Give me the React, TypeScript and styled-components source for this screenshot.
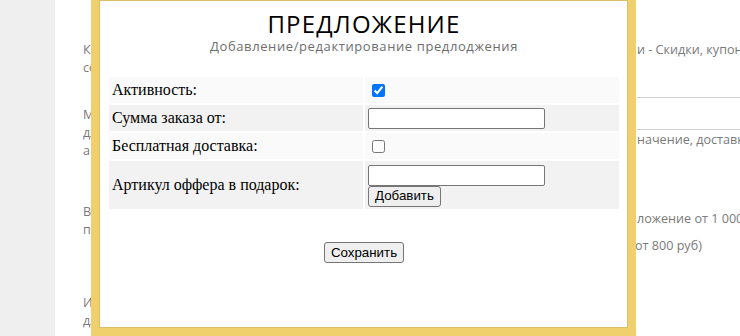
import React from "react";
import styled, { createGlobalStyle } from "styled-components";

const Global = createGlobalStyle`
  html, body { margin: 0; padding: 0; background: #fff; }
  body { width: 740px; height: 336px; overflow: hidden; }
  #root { position: relative; height: 336px; }
`;

const Page = styled.div`
  display: grid;
  grid-template-columns: 55px 1fr;
  height: 336px;
  overflow: hidden;
`;

const Sidebar = styled.aside`
  background: #efeff0;
`;

const Content = styled.main`
  display: grid;
  grid-template-columns: 554px 1fr;
  padding-left: 28px;
  font-family: "Open Sans", "Liberation Sans", sans-serif;
  font-size: 12.6px;
  line-height: 18px;
  color: #7a7a7a;
  overflow: hidden;
`;

const Column = styled.div`
  display: flex;
  flex-direction: column;
  min-width: 0;
`;

const Para = styled.div<{ $mt: number }>`
  margin-top: ${(p) => p.$mt}px;
`;

const Line = styled.div`
  white-space: nowrap;
  overflow: hidden;
`;

const Rule = styled.hr<{ $mt: number }>`
  margin: ${(p) => p.$mt}px 0 0 0;
  border: none;
  border-top: 1px solid #cfcfcf;
  height: 0;
`;

const RightLine = styled.div<{ $mt: number; $shift?: number }>`
  margin-top: ${(p) => p.$mt}px;
  margin-left: ${(p) => p.$shift ?? 0}px;
  white-space: nowrap;
`;

const Modal = styled.section`
  position: absolute;
  left: 91px;
  top: 0;
  width: 545px;
  height: 336px;
  box-sizing: border-box;
  border: 8px solid #efd06c;
  border-top: none;
  background: #fff;
  box-shadow: inset 0 0 0 1px #dcc067;
  padding: 10px 7px 0 8px;
`;

const Title = styled.h1`
  margin: 0;
  text-align: center;
  font-family: "Open Sans", "Liberation Sans", sans-serif;
  font-weight: 400;
  font-size: 24px;
  letter-spacing: 1.2px;
  line-height: 28px;
  color: #000;
`;

const Subtitle = styled.div`
  text-align: center;
  font-family: "Open Sans", "Liberation Sans", sans-serif;
  font-size: 13px;
  letter-spacing: 0.6px;
  line-height: 16px;
  color: #6e6e6e;
`;

const Table = styled.table`
  margin-top: 21px;
  width: 514px;
  border-spacing: 2px;
  font-family: "Liberation Serif", "Times New Roman", serif;
  font-size: 16px;
  color: #000;
`;

const Row = styled.tr<{ $alt: boolean; $h?: number }>`
  background: ${(p) => (p.$alt ? "#f2f2f2" : "#fafafa")};
  height: ${(p) => p.$h ?? 26}px;
`;

const Cell = styled.td`
  width: 50%;
  padding: 0 3px;
  vertical-align: middle;
`;

const Stack = styled.div`
  display: flex;
  flex-direction: column;
  align-items: flex-start;
  padding: 1px 0 0 0;
`;

const TextInput = styled.input`
  box-sizing: border-box;
  width: 177px;
  height: 21px;
  margin: 0;
  border: 1px solid #767676;
  border-radius: 2px;
  padding: 1px 2px;
  font-family: "Liberation Sans", Arial, sans-serif;
  font-size: 13.33px;
  display: block;
`;

const Check = styled.input`
  width: 13px;
  height: 13px;
  margin: 3px 3px 3px 4px;
  display: block;
`;

const Button = styled.button`
  box-sizing: border-box;
  height: 21px;
  margin: 0;
  padding: 1px 6px;
  border: 1px solid #767676;
  border-radius: 3px;
  background: #efefef;
  font-family: "Liberation Sans", Arial, sans-serif;
  font-size: 13.33px;
  color: #000;
  line-height: 16px;
`;

const Footer = styled.div`
  text-align: center;
  padding-top: 31px;
`;

export default function App() {
  return (
    <>
      <Global />
      <Page>
        <Sidebar />
        <Content>
          <Column>
            <Para $mt={41}>
              <Line>Каждое предложение можно настроить в разделе Маркетинг и акции</Line>
              <Line>сочетается с другими акциями магазина</Line>
            </Para>
            <Para $mt={29}>
              <Line>Можно задать минимальную сумму заказа, бесплатную доставку</Line>
              <Line>для покупателя и подарок к заказу, а также любое значение</Line>
              <Line>а также артикул товара</Line>
            </Para>
            <Para $mt={43}>
              <Line>Вы можете создать, например, предложение от 1 000 руб</Line>
              <Line>при заказе на сумму от 800 руб</Line>
            </Para>
            <Para $mt={55}>
              <Line>Используйте предложения</Line>
              <Line>для повышения среднего чека</Line>
            </Para>
          </Column>
          <Column>
            <RightLine $mt={41}>и - Скидки, купоны и подарки</RightLine>
            <Rule $mt={38} />
            <Rule $mt={31} />
            <RightLine $mt={1}>начение, доставка</RightLine>
            <RightLine $mt={61}>ложение от 1 000 руб</RightLine>
            <RightLine $mt={9} $shift={-2}>от 800 руб)</RightLine>
          </Column>
        </Content>
      </Page>
      <Modal>
        <Title>ПРЕДЛОЖЕНИЕ</Title>
        <Subtitle>Добавление/редактирование предлоджения</Subtitle>
        <Table>
          <tbody>
            <Row $alt={false}>
              <Cell>Активность:</Cell>
              <Cell>
                <Check type="checkbox" defaultChecked />
              </Cell>
            </Row>
            <Row $alt={true}>
              <Cell>Сумма заказа от:</Cell>
              <Cell>
                <TextInput type="text" />
              </Cell>
            </Row>
            <Row $alt={false}>
              <Cell>Бесплатная доставка:</Cell>
              <Cell>
                <Check type="checkbox" />
              </Cell>
            </Row>
            <Row $alt={true} $h={48}>
              <Cell>Артикул оффера в подарок:</Cell>
              <Cell>
                <Stack>
                  <TextInput type="text" />
                  <Button type="button">Добавить</Button>
                </Stack>
              </Cell>
            </Row>
          </tbody>
        </Table>
        <Footer>
          <Button type="button">Сохранить</Button>
        </Footer>
      </Modal>
    </>
  );
}
